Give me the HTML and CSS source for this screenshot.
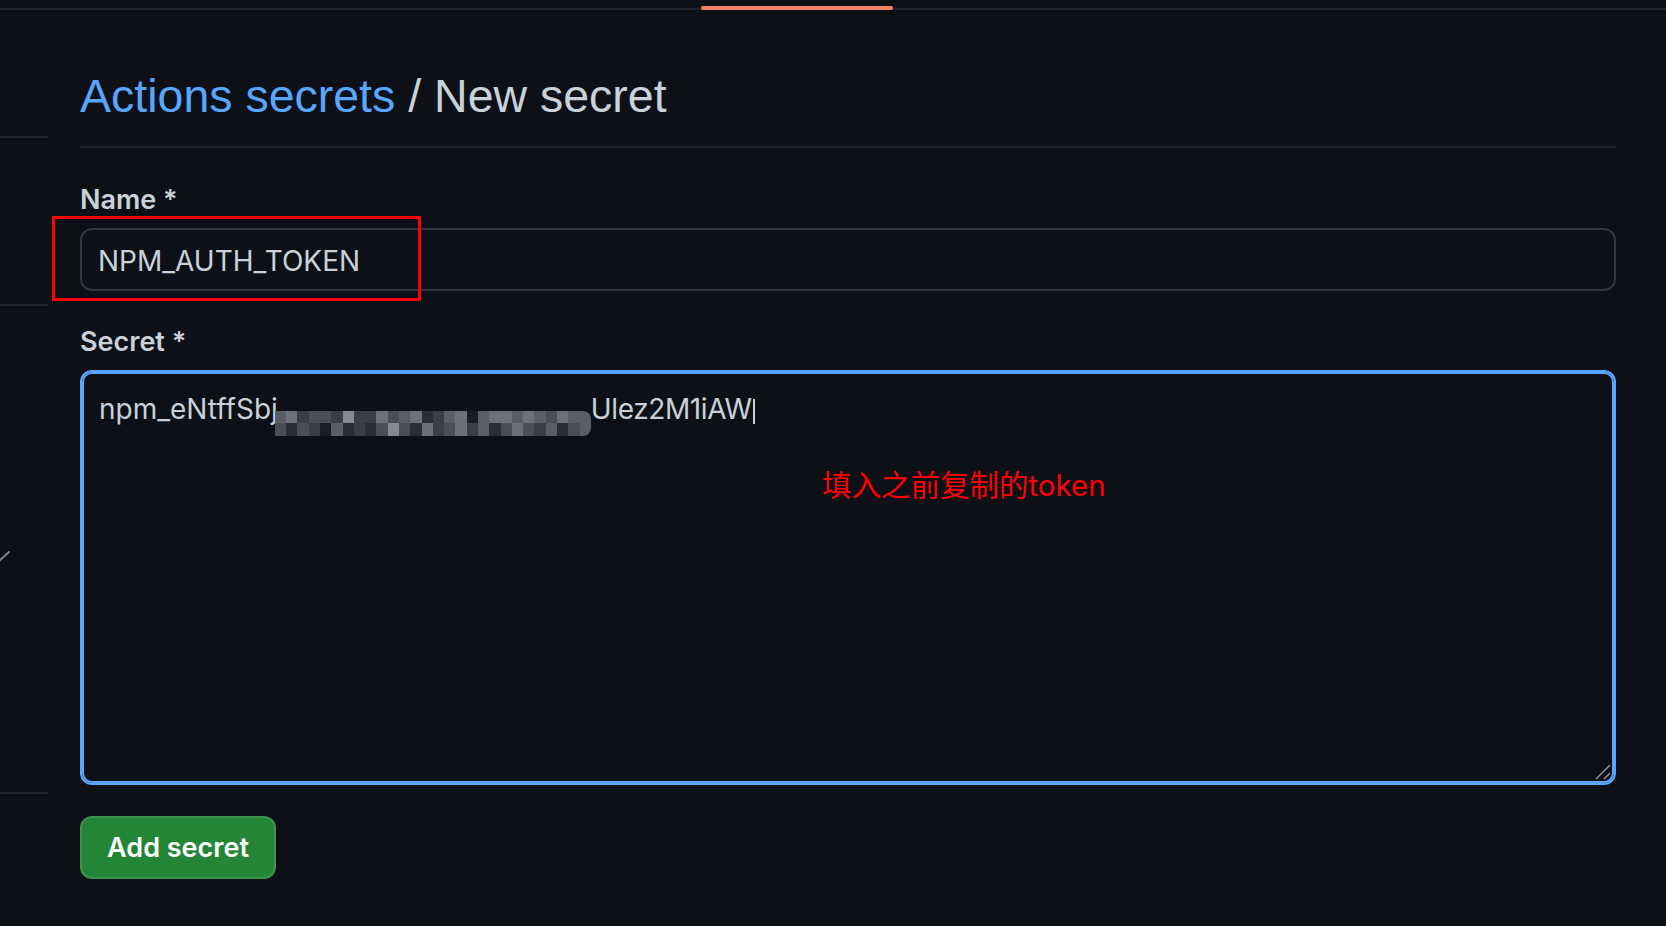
FILE: index.html
```html
<!DOCTYPE html>
<html lang="en">
<head>
<meta charset="utf-8">
<title>Actions secrets / New secret</title>
<link rel="stylesheet" href="styles.css">
</head>
<body>
<div class="topnav"><span class="tab-indicator"></span></div>
<div class="layout">
  <aside class="sidebar">
    <div class="side-block b1"></div>
    <div class="side-block b2"></div>
    <div class="side-block b3">
      <svg class="side-icon" width="12" height="12" viewBox="0 0 12 12"><path d="M0 11 L10 2" stroke="#7d8590" stroke-width="2" stroke-linecap="round" fill="none"/></svg>
    </div>
  </aside>
  <main class="content">
    <h2 class="subhead"><a class="crumb" href="#">Actions secrets</a> / New secret</h2>
    <div class="field field-name">
      <label class="label">Name *</label>
      <div class="input-wrap">
        <div class="input">NPM_AUTH_TOKEN</div>
        <span class="annot-box"></span>
      </div>
    </div>
    <div class="field field-secret">
      <label class="label">Secret *</label>
      <div class="textarea">
        <div class="line">npm_eNtffSbj<span class="mosaic"><i class="g5"></i><i class="g6"></i><i class="g3"></i><i class="g4"></i><i class="g4"></i><i class="g3"></i><i class="g7"></i><i class="g3"></i><i class="g3"></i><i class="g6"></i><i class="g4"></i><i class="g5"></i><i class="g6"></i><i class="g2"></i><i class="g3"></i><i class="g5"></i><i class="g6"></i><i class="g1"></i><i class="g5"></i><i class="g6"></i><i class="g6"></i><i class="g5"></i><i class="g6"></i><i class="g5"></i><i class="g4"></i><i class="g6"></i><i class="g5"></i><i class="g5"></i><i class="g4"></i><i class="g2"></i><i class="g4"></i><i class="g3"></i><i class="g1"></i><i class="g5"></i><i class="g2"></i><i class="g3"></i><i class="g2"></i><i class="g4"></i><i class="g7"></i><i class="g4"></i><i class="g2"></i><i class="g6"></i><i class="g3"></i><i class="g4"></i><i class="g6"></i><i class="g3"></i><i class="g5"></i><i class="g2"></i><i class="g4"></i><i class="g6"></i><i class="g4"></i><i class="g3"></i><i class="g5"></i><i class="g2"></i><i class="g4"></i><i class="g5"></i></span><span class="tail">Ulez2M1iAW</span><span class="caret"></span></div>
        <span class="annot-text">填入之前复制的token</span>
        <svg class="resize" width="16" height="16" viewBox="0 0 16 16"><path d="M1 15 L15 1 M9 15 L15 9" stroke="#8b949e" stroke-width="1.5" fill="none"/></svg>
      </div>
    </div>
    <button class="btn" type="button">Add secret</button>
  </main>
</div>
</body>
</html>
```

FILE: styles.css
```css
* { box-sizing: border-box; }
html, body { margin: 0; padding: 0; }
body {
  background: #0d1117;
  color: #c9d1d9;
  font-family: Inter, "Noto Sans CJK SC", sans-serif;
  width: 1666px;
  height: 926px;
  overflow: hidden;
}
.topnav {
  position: relative;
  height: 10px;
  border-bottom: 2px solid #21262d;
}
.tab-indicator {
  position: absolute;
  left: 701px;
  top: 6px;
  width: 192px;
  height: 4px;
  border-radius: 2px;
  background: #f78166;
}
.layout {
  display: flex;
  gap: 32px;
}
.sidebar {
  width: 48px;
  flex: none;
  display: flex;
  flex-direction: column;
}
.side-block { border-bottom: 2px solid #21262d; }
.b1 { height: 128px; }
.b2 { height: 168px; }
.b3 { height: 488px; padding-top: 244px; }
.side-icon { display: block; margin-left: -1px; }
.content {
  width: 1536px;
  flex: none;
}
.subhead {
  margin: 0;
  padding: 56px 0 20px;
  font-family: "Liberation Sans", Arial, sans-serif;
  font-size: 46.5px;
  line-height: 60px;
  font-weight: 400;
  color: #c9d1d9;
  border-bottom: 2px solid #21262d;
}
.crumb { color: #58a6ff; text-decoration: none; }
.field { display: flex; flex-direction: column; }
.field-name { margin-top: 34px; }
.field-secret { margin-top: 33px; }
.label {
  font-size: 27px;
  line-height: 36px;
  font-weight: 600;
  margin-bottom: 10px;
  color: #c9d1d9;
}
.input-wrap { position: relative; }
.input {
  height: 63px;
  border: 2px solid #30363d;
  border-radius: 12px;
  background: #0d1117;
  padding: 3px 16px 0;
  font-size: 28px;
  line-height: 56px;
  color: #c9d1d9;
}
.annot-box {
  position: absolute;
  left: -28px;
  top: -12px;
  width: 369px;
  height: 85px;
  border: 3px solid #ff0000;
}
.textarea {
  position: relative;
  height: 415px;
  border: 2px solid #58a6ff;
  box-shadow: inset 0 0 0 2px #58a6ff;
  border-radius: 12px;
  padding: 17px 17px;
  font-size: 28px;
  line-height: 40px;
  color: #c9d1d9;
}
.line { white-space: nowrap; }
.tail { letter-spacing: -0.4px; }
.mosaic {
  display: inline-grid;
  grid-template-columns: repeat(28, 1fr);
  grid-template-rows: 1fr 1fr;
  width: 316px;
  height: 25px;
  margin-left: -3px;
  vertical-align: -4px;
  border-radius: 0 8px 8px 0;
  overflow: hidden;
}
.mosaic i { display: block; }
.g1 { background: #1a1e25; }
.g2 { background: #2a2e35; }
.g3 { background: #3a3e45; }
.g4 { background: #4a4e55; }
.g5 { background: #5a5e65; }
.g6 { background: #6c7077; }
.g7 { background: #858990; }
.caret {
  display: inline-block;
  width: 2px;
  height: 25px;
  background: #c9d1d9;
  vertical-align: -5px;
  margin-left: 1px;
}
.annot-text {
  position: absolute;
  left: 740px;
  top: 93px;
  font-size: 29.5px;
  line-height: 40px;
  color: #ff0000;
  font-family: Inter, "Noto Sans CJK SC", sans-serif;
}
.resize {
  position: absolute;
  right: 3px;
  bottom: 3px;
}
.btn {
  display: block;
  margin-top: 31px;
  width: 196px;
  height: 63px;
  border: 2px solid rgba(240, 246, 252, 0.12);
  border-radius: 12px;
  background: #238636;
  color: #ffffff;
  font-family: Inter, sans-serif;
  font-size: 27px;
  font-weight: 600;
  line-height: 59px;
  padding: 0;
  text-align: center;
}
```
